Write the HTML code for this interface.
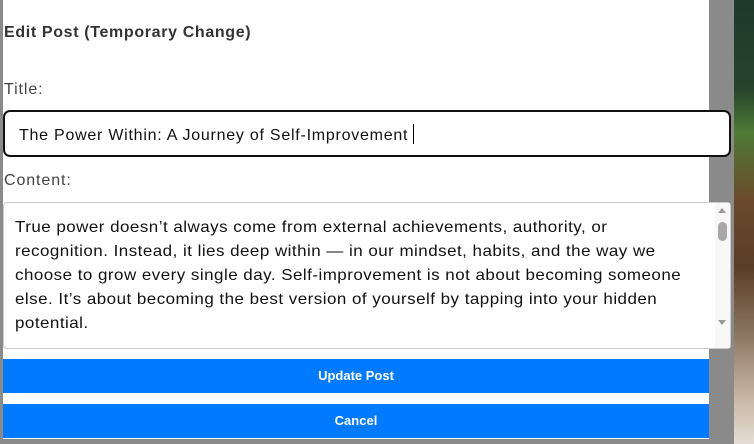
<!DOCTYPE html>
<html><head><style>
*{margin:0;padding:0;box-sizing:border-box}
body{width:754px;height:444px;overflow:hidden;background:#8a8a8a;position:relative;font-family:"Liberation Sans",sans-serif;color:#333}
.photo{position:absolute;left:734px;top:0;width:20px;height:444px;background:linear-gradient(180deg,#1d3a2a 0%,#26442c 20%,#4f7a36 30%,#6b4a2c 45%,#5a3d28 60%,#8a7460 75%,#c9b8a6 90%,#e5ddd5 100%)}
.panel{position:absolute;left:3px;top:0;width:706px;height:439px;background:#fff}
.t{position:absolute;white-space:nowrap}
.h{left:4px;top:24px;font-weight:bold;font-size:16px;color:#333;letter-spacing:0.65px}
.lbl{font-size:16px;color:#444;left:4px;letter-spacing:0.9px}
.input{position:absolute;left:3px;top:110px;width:728px;height:47px;border:2px solid #111;border-radius:7px;background:#fff}
.ta{position:absolute;left:3px;top:202px;width:728px;height:147px;border:1px solid #ccc;border-radius:4px;background:#fff}
.line{position:absolute;left:11px;font-size:16px;color:#111;letter-spacing:0.45px;white-space:nowrap;transform:scaleX(1.06);transform-origin:0 0}
.btn{position:absolute;left:3px;width:706px;height:34px;background:#007bff;color:#fff;font-weight:bold;font-size:13px;text-align:center;line-height:34px}
</style></head><body>
<div class="photo"></div>
<div class="panel"></div>
<div class="t h">Edit Post (Temporary Change)</div>
<div class="t lbl" style="top:81px">Title:</div>
<div class="input"><div class="t" style="left:14px;top:12px;font-size:16px;color:#111;letter-spacing:0.75px">The Power Within: A Journey of Self-Improvement <span style="display:inline-block;width:1px;height:20px;background:#000;vertical-align:-4px"></span></div></div>
<div class="t lbl" style="top:172px">Content:</div>
<div class="ta">
<div class="line" style="top:16px">True power doesn’t always come from external achievements, authority, or</div>
<div class="line" style="top:40px">recognition. Instead, it lies deep within — in our mindset, habits, and the way we</div>
<div class="line" style="top:64px">choose to grow every single day. Self-improvement is not about becoming someone</div>
<div class="line" style="top:88px">else. It’s about becoming the best version of yourself by tapping into your hidden</div>
<div class="line" style="top:112px">potential.</div>
<div style="position:absolute;right:0;top:0;width:15px;height:145px;background:#f8f8f8"></div>
<div style="position:absolute;right:4px;top:5px;width:0;height:0;border-left:4px solid transparent;border-right:4px solid transparent;border-bottom:5px solid #999"></div>
<div style="position:absolute;right:3px;top:19px;width:9px;height:19px;border-radius:5px;background:#a8a8a8"></div>
<div style="position:absolute;right:4px;top:117px;width:0;height:0;border-left:4px solid transparent;border-right:4px solid transparent;border-top:5px solid #999"></div>
</div>
<div class="btn" style="top:359px">Update Post</div>
<div class="btn" style="top:404px">Cancel</div>
</body></html>
